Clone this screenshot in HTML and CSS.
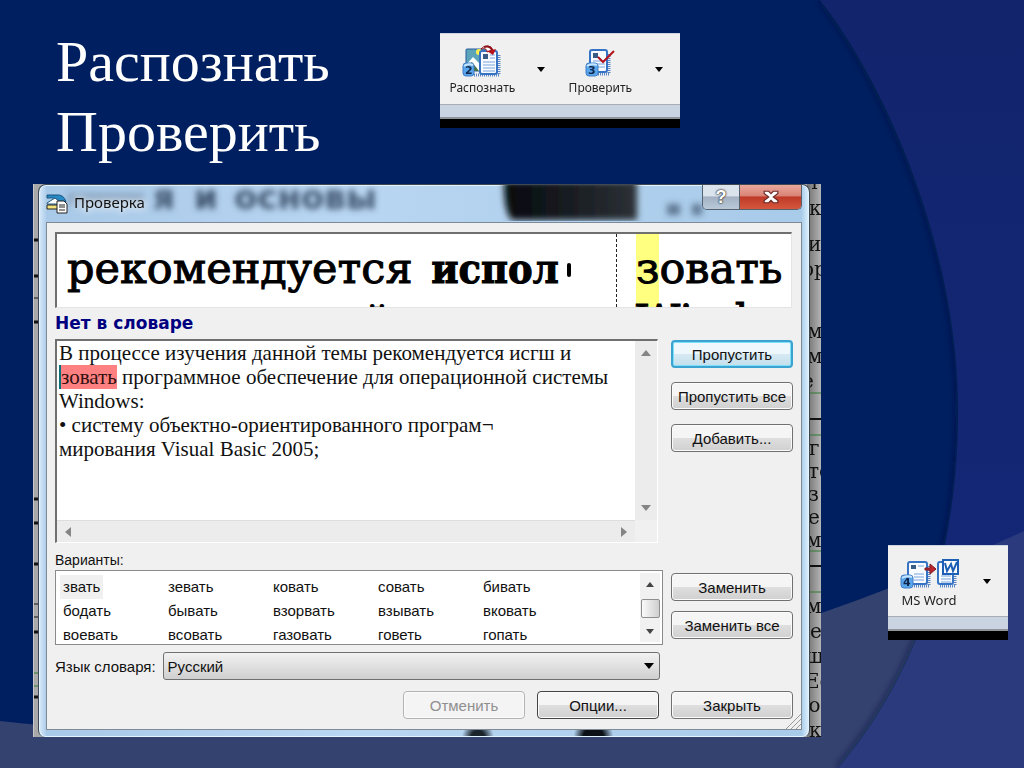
FILE: index.html
```html
<!DOCTYPE html>
<html lang="ru">
<head>
<meta charset="utf-8">
<meta name="viewport" content="width=device-width, initial-scale=1">
<title>Распознать Проверить</title>
<link rel="stylesheet" href="styles.css">
</head>
<body>
<svg class="backdrop" viewBox="0 0 1024 768" preserveAspectRatio="none" aria-hidden="true">
  <defs>
    <linearGradient id="side" x1="0" y1="0" x2="0" y2="1"><stop offset="0" stop-color="#12246c"/><stop offset="1" stop-color="#14287a"/></linearGradient>
    <filter id="soft" x="-10%" y="-10%" width="120%" height="120%"><feGaussianBlur stdDeviation="3"/></filter>
    <clipPath id="disc"><path d="M0 0H820C890 90 958 255 958 410C958 540 925 665 838 768H0Z"/></clipPath>
  </defs>
  <rect width="1024" height="768" fill="url(#side)"/>
  <path d="M0 721C330 760 700 680 1024 531V768H0Z" fill="#2b3a7c"/>
  <g clip-path="url(#disc)">
    <rect width="1024" height="768" fill="#001f60"/>
    <path d="M0 721C330 760 700 680 1024 531V768H0Z" fill="#344270"/>
    <path d="M820 0C890 90 958 255 958 410C958 540 925 665 838 768" fill="none" stroke="#001038" stroke-opacity=".5" stroke-width="6" filter="url(#soft)"/>
  </g>
</svg>

<main class="slide">
  <section class="content">
    <header class="heading">
      <h1>Распознать Проверить</h1>
      <div class="strip">
        <div class="tools">
          <button class="tool" type="button">
            <svg width="40" height="34" viewBox="0 0 40 34" aria-hidden="true">
              <path d="M12 31H37V10" stroke="#5a87c4" stroke-width="3" stroke-dasharray="1 1" fill="none"/>
              <rect x="4" y="5" width="20" height="22" rx="1" fill="#5ba4ba" stroke="#275b9c"/>
              <circle cx="17" cy="8" r="3" fill="#fff04a"/>
              <path d="M5 20L11 13L19 21V27H5Z" fill="#fff"/><path d="M5 22L10 18L17 27H5Z" fill="#43733f"/>
              <rect x="18" y="7" width="17" height="23" rx="2" fill="#f7fbff" stroke="#3673c4" stroke-width="2"/>
              <rect x="21" y="10" width="5" height="5" fill="#3a5d88"/><path d="M28 11H33M28 14H33M21 18H33M21 21H33M21 24H33M21 27H33" stroke="#78a2dd"/>
              <path d="M19 5C22 1 29 1 31 6L25 8C25 5 23 4 19 5Z" fill="#fff" stroke="#8e1117"/><path d="M22 3Q28 1 30 6" stroke="#8e1117" stroke-width="2" fill="none"/><path d="M25 7L34 5L31 11Z" fill="#b3121c"/>
              <rect x="1" y="19" width="11" height="13" rx="3" fill="#5aa6ed" stroke="#3f7cc6"/><path d="M2 22Q6 19 11 21" stroke="#c6e5ff" stroke-width="2" fill="none"/>
              <text x="3" y="30" class="badge">2</text>
            </svg>
            <span>Распознать</span>
          </button>
          <button class="drop" type="button" aria-label="Меню распознавания"><svg width="8" height="5" viewBox="0 0 8 5"><path d="M0 0H8L4 5Z"/></svg></button>
          <button class="tool" type="button">
            <svg width="40" height="34" viewBox="0 0 40 34" aria-hidden="true">
              <path d="M18 30H29V9" stroke="#5a87c4" stroke-width="3" stroke-dasharray="1 1" fill="none"/>
              <rect x="10" y="6" width="17" height="22" rx="2" fill="#f7fbff" stroke="#3673c4" stroke-width="2"/>
              <rect x="13" y="9" width="5" height="5" fill="#3a5d88"/><path d="M13 17H25M13 20H25M13 23H25" stroke="#78a2dd"/>
              <path d="M18 13L23 18L34 7" stroke="#b3121c" stroke-width="2" fill="none"/>
              <rect x="6" y="19" width="12" height="13" rx="3" fill="#5aa6ed" stroke="#3f7cc6"/><path d="M7 22Q11 19 17 21" stroke="#c6e5ff" stroke-width="2" fill="none"/>
              <text x="8" y="30" class="badge">3</text>
            </svg>
            <span>Проверить</span>
          </button>
          <button class="drop" type="button" aria-label="Меню проверки"><svg width="8" height="5" viewBox="0 0 8 5"><path d="M0 0H8L4 5Z"/></svg></button>
        </div>
      </div>
    </header>

    <div class="shot">
      <svg class="page-left" width="5" height="553" viewBox="0 0 5 553" aria-hidden="true">
        <path d="M0 56H5M0 92H5M0 138H5M0 315H5M0 339H5M0 380H5M0 448H5M0 513H5" stroke="#111" stroke-width="3"/>
        <path d="M0 489H5M0 502H5" stroke="#2f7d32"/><path d="M0 114H5M0 420H5M0 433H5" stroke="#111"/>
      </svg>
      <svg class="page-edge" width="14" height="553" viewBox="0 0 14 553" aria-hidden="true">
        <g class="edge-text">
          <text x="2" y="5">т</text><text x="2" y="31">к</text><text x="1" y="67">и</text><text x="-5" y="92">ор</text>
          <text x="0" y="154">м</text><text x="0" y="179">м</text><text x="-5" y="204">е</text>
          <text x="2" y="271">г</text><text x="1" y="294">то</text><text x="1" y="317">з</text><text x="1" y="340">е</text><text x="-1" y="363">м</text>
          <text x="-1" y="429">м</text><text x="3" y="454">е</text><text x="-2" y="479">ш</text><text x="-2" y="504">Ес</text><text x="-4" y="528">ю</text><text x="2" y="553">к</text>
        </g>
        <path d="M0 209H14M0 251H14M0 367H14M0 408H14" stroke="#2f7d32"/>
        <path d="M0 235H14M0 382H14" stroke="#111" stroke-width="2"/>
      </svg>
      <section class="window" aria-labelledby="wtitle">
        <div class="titlebar">
          <svg class="glass" width="680" height="36" viewBox="0 0 680 36" aria-hidden="true">
            <defs>
              <filter id="haze" x="-20%" y="-50%" width="140%" height="200%"><feGaussianBlur stdDeviation="3"/></filter>
              <linearGradient id="blob"><stop offset="0" stop-color="#05090e"/><stop offset="1" stop-color="#2c3136"/></linearGradient>
            </defs>
            <g filter="url(#haze)" class="haze-text">
              <path d="M22 8H98V20H22Z" opacity=".3"/><text x="107" y="24">я</text><text x="148" y="24">и</text><text x="188" y="24">основы</text>
              <path d="M621 19H634V30H621ZM646 19H656V30H646Z" opacity=".7"/>
            </g>
            <path d="M458 -4H591V35H466Q458 28 458 -4Z" fill="url(#blob)" filter="url(#haze)"/>
          </svg>
          <svg class="app-icon" width="22" height="20" viewBox="0 0 22 20" aria-hidden="true">
            <path d="M1 1H10Q18 0 20 8H14Q11 3 1 4Z" fill="#2789c5" stroke="#16547f"/>
            <path d="M1 9L9 4L14 8V10H1Z" fill="#fff" stroke="#225a83"/><path d="M1 11H12V15H1Z" fill="#f4e27f" stroke="#222"/>
            <path d="M11 7H18L21 10V19H11Z" fill="#fff" stroke="#222"/><path d="M13 11H19M13 13H19M13 16H19" stroke="#222"/>
          </svg>
          <h2 id="wtitle">Проверка</h2>
          <div class="caption">
            <button type="button" class="help" aria-label="Справка">?</button>
            <button type="button" class="close" aria-label="Закрыть окно"><svg width="16" height="14" viewBox="0 0 14 12"><path d="M1 1H5L7 3L9 1H13V3L9 6L13 9V11H9L7 9L5 11H1V9L5 6L1 3V1Z" fill="#fff" stroke="#6b2b28"/></svg></button>
          </div>
        </div>

        <div class="panel">
          <div class="scan">
            <div class="scan-left"><span>рекомендуется</span> <b>испол</b><i></i><div class="scan-next">й</div></div>
            <div class="scan-right"><mark>з</mark>овать<div>Wind</div></div>
          </div>
          <p class="notice">Нет в словаре</p>

          <div class="row">
            <div class="editor">
              <div class="text" role="textbox" aria-multiline="true" aria-label="Текст" contenteditable="true" spellcheck="false">В процессе изучения данной темы рекомендуется исгш и<br><mark>зовать</mark> программное обеспечение для операционной системы<br>Windows:<br>• систему объектно-ориентированного програм¬<br>мирования Visual Basic 2005;</div>
              <div class="vbar"><svg width="10" height="6" viewBox="0 0 10 6"><path d="M0 6H10L5 0Z"/></svg><svg width="10" height="6" viewBox="0 0 10 6"><path d="M0 0H10L5 6Z"/></svg></div>
              <div class="hbar"><svg width="6" height="10" viewBox="0 0 6 10"><path d="M6 0V10L0 5Z"/></svg><svg width="6" height="10" viewBox="0 0 6 10"><path d="M0 0V10L6 5Z"/></svg></div>
            </div>
            <div class="stack stack-wide">
              <button type="button" class="btn default">Пропустить</button>
              <button type="button" class="btn">Пропустить все</button>
              <button type="button" class="btn">Добавить...</button>
            </div>
          </div>

          <p class="variants" id="variants">Варианты:</p>
          <div class="row">
            <div class="listbox">
              <ul role="listbox" aria-labelledby="variants">
                <li role="option" aria-selected="true"><span>звать</span></li><li role="option">зевать</li><li role="option">ковать</li><li role="option">совать</li><li role="option">бивать</li>
                <li role="option">бодать</li><li role="option">бывать</li><li role="option">взорвать</li><li role="option">взывать</li><li role="option">вковать</li>
                <li role="option">воевать</li><li role="option">всовать</li><li role="option">газовать</li><li role="option">говеть</li><li role="option">гопать</li>
              </ul>
              <div class="listbar"><svg width="8" height="5" viewBox="0 0 8 5"><path d="M0 5H8L4 0Z"/></svg><div class="thumb"></div><svg width="8" height="5" viewBox="0 0 8 5"><path d="M0 0H8L4 5Z"/></svg></div>
            </div>
            <div class="stack">
              <button type="button" class="btn">Заменить</button>
              <button type="button" class="btn">Заменить все</button>
            </div>
          </div>

          <div class="language">
            <label for="lang">Язык словаря:</label>
            <div class="combo">
              <select id="lang"><option>Русский</option></select>
              <svg width="10" height="6" viewBox="0 0 10 6" aria-hidden="true"><path d="M0 0H10L5 6Z"/></svg>
            </div>
          </div>

          <div class="actions">
            <button type="button" class="btn" disabled>Отменить</button>
            <button type="button" class="btn strong">Опции...</button>
            <button type="button" class="btn">Закрыть</button>
          </div>
          <svg class="grip" width="15" height="15" viewBox="0 0 15 15" aria-hidden="true"><path d="M0 15L15 0M5 15L15 5M10 15L15 10" stroke="#999" stroke-width="1"/></svg>
        </div>
      </section>
    </div>
  </section>

  <aside class="export">
    <div class="strip">
      <div class="tools">
        <button class="tool" type="button">
          <svg width="62" height="34" viewBox="0 0 62 34" aria-hidden="true">
            <path d="M16 30H31V10M42 30H57V20" stroke="#5a87c4" stroke-width="3" stroke-dasharray="1 1" fill="none"/>
            <rect x="10" y="6" width="19" height="22" rx="2" fill="#f7fbff" stroke="#3673c4" stroke-width="2"/>
            <rect x="13" y="9" width="5" height="4" fill="#3a5d88"/><path d="M20 10H26M16 18H26M16 21H26M16 24H26" stroke="#78a2dd"/>
            <rect x="40" y="6" width="15" height="22" rx="2" fill="#f7fbff" stroke="#3673c4" stroke-width="2"/><path d="M43 20H53M43 23H53M43 26H53" stroke="#78a2dd"/>
            <path d="M27 12H32V8L38 13L32 18V14H27Z" fill="#bd2530" stroke="#7f1a20"/>
            <rect x="45" y="4" width="15" height="14" fill="#fff" stroke="#1c5fb5" stroke-width="2"/><path d="M47 7L49 15L53 8L55 15L59 6" stroke="#1c5fb5" stroke-width="2" fill="none"/>
            <rect x="3" y="19" width="12" height="13" rx="3" fill="#5aa6ed" stroke="#3f7cc6"/><path d="M4 22Q8 19 14 21" stroke="#c6e5ff" stroke-width="2" fill="none"/>
            <text x="5" y="30" class="badge">4</text>
          </svg>
          <span>MS Word</span>
        </button>
        <button class="drop" type="button" aria-label="Меню экспорта"><svg width="8" height="5" viewBox="0 0 8 5"><path d="M0 0H8L4 5Z"/></svg></button>
      </div>
    </div>
  </aside>
</main>
</body>
</html>
```
FILE: styles.css
```css
* { box-sizing: border-box; }
body { margin: 0; background: #001f60; color: #111; font-family: "Liberation Sans", Arial, sans-serif; }
button, select { font-family: inherit; color: inherit; }
h1, h2, p, ul { margin: 0; padding: 0; font-weight: 400; }
.backdrop { position: fixed; inset: 0; width: 100%; height: 100%; z-index: -1; }

.slide { display: flex; gap: 67px; min-height: 100vh; padding: 27px 16px 31px 33px; }
.content { flex: 1; min-width: 0; }
.heading { display: flex; justify-content: space-between; align-items: flex-start; padding: 0 141px 0 23px; height: 157px; }
.heading h1 { width: 300px; color: #fff; font-family: "Liberation Serif", "Times New Roman", serif; font-size: 58px; line-height: 70px; }
.heading .strip { width: 240px; margin-top: 6px; }
.export { width: 120px; margin-top: 518px; }

.strip { background: #f0f0f0; border-top: 1px solid #cdd5e2; border-bottom: 9px solid #000; }
.strip::after { content: ""; display: block; height: 12px; background: #c9d3e1; border-top: 1px solid #a8adb3; border-bottom: 2px solid #8f9499; }
.tools { display: flex; height: 70px; padding-left: 4px; }
.tool, .drop { border: 0; background: none; padding: 0; }
.tool { width: 78px; display: flex; flex-direction: column; align-items: center; padding-top: 10px; font: 12px/20px "Noto Sans", sans-serif; color: #222; white-space: nowrap; }
.export .tool { width: 74px; font-size: 13px; }
.tool svg { flex: none; }
.drop { width: 42px; display: flex; justify-content: center; align-items: center; }
.badge { font: bold 11px "DejaVu Sans", sans-serif; fill: #10264a; }

.shot { position: relative; overflow: hidden; background: #a9a9a9; padding: 0 11px 0 4px; border-left: 1px solid #c8c8c8; }
.page-left { position: absolute; top: 0; left: 0; }
.page-edge { position: absolute; top: 0; right: 0; background: linear-gradient(90deg, #707070, #b4b4b4); }
.edge-text { font: 20px "DejaVu Serif", serif; fill: #111; }

.window {
  position: relative; padding: 0 7px 7px 7px; border: 1px solid #3d4854; border-bottom: 0; border-radius: 8px 8px 7px 7px;
  background:
    radial-gradient(circle 16px at 57% 100%, #1b232b 40%, transparent) no-repeat,
    radial-gradient(circle 20px at 72% 100%, #0b1117 50%, transparent) no-repeat,
    linear-gradient(90deg, #d9ebfa 0, #a9c9e8 8px, #b9d6f2 40%, #a8cbe9 99%, #e0f2ff 100%);
  box-shadow: inset 0 0 0 1px #e4f4ff;
}
.titlebar { position: relative; display: flex; align-items: center; gap: 6px; height: 37px; }
.glass { position: absolute; left: 0; top: 0; overflow: hidden; }
.haze-text { font: bold 34px "DejaVu Sans", sans-serif; fill: #3f546e; }
.app-icon, .titlebar h2 { position: relative; }
.titlebar h2 { font: 15px/20px "Noto Sans", sans-serif; text-shadow: 0 0 6px #fff, 0 0 8px #fff; padding-bottom: 4px; }
.caption { position: relative; align-self: flex-start; margin-left: auto; display: flex; height: 25px; border: 1px solid #56616e; border-top: 0; border-radius: 0 0 5px 5px; overflow: hidden; }
.caption button { border: 0; padding: 0; display: flex; align-items: center; justify-content: center; }
.help { width: 36px; color: #fff; font-size: 18px; font-weight: 700; background: linear-gradient(#dbe3ec 45%, #a3b1c3 50%, #b9c9da); text-shadow: 0 0 2px #222, 0 0 2px #222; }
.caption .close { width: 62px; border-left: 1px solid #56616e; background: linear-gradient(#e9a79c 0, #d98476 45%, #bf3a28 50%, #d5573c); }

.panel { position: relative; padding: 9px 8px 10px; border: 1px solid #7e8a98; background: #f0f0f0; }
.scan { display: flex; height: 76px; overflow: hidden; margin-right: 1px; border: 1px solid #e4e4e4; border-top: 2px solid #6f6f6f; border-left: 2px solid #6f6f6f; background: #fff; color: #000; font: 43px/52px "DejaVu Serif", serif; -webkit-text-stroke: 1px #000; white-space: nowrap; }
.scan-left { flex: 1; min-width: 0; padding: 8px 0 0 10px; border-right: 1px dashed #222; }
.scan-left b { margin-left: 5px; font-family: "DejaVu Serif Condensed", "DejaVu Serif", serif; font-size: 41px; }
.scan-left i { display: inline-block; width: 4px; height: 14px; margin-left: 8px; background: #000; border-radius: 2px; vertical-align: 6px; }
.scan-next { padding-left: 296px; }
.scan-right { width: 174px; padding: 8px 0 0 19px; }
.scan-right mark { padding: 20px 0; background: #ffff80; }
.notice { color: #000080; font: bold 17px/31px "DejaVu Sans", sans-serif; }
.row { display: grid; grid-template-columns: minmax(0, 1fr) 122px; gap: 8px; }

.editor { display: grid; grid-template: 1fr 22px / minmax(0, 1fr) 22px; height: 204px; margin-right: 5px; border: 1px solid #fff; border-top: 2px solid #6f6f6f; border-left: 2px solid #6f6f6f; background: #f0f0f0; }
.text { padding: 0 0 0 2px; background: #fff; color: #111; font: 21px/24px "Liberation Serif", "Times New Roman", serif; white-space: nowrap; overflow: hidden; outline: 0; }
.text mark { background: #ff8080; color: #301010; border-left: 2px solid #087078; }
.vbar, .hbar { display: flex; justify-content: space-between; align-items: center; fill: #858585; background: #ececec; }
.vbar { flex-direction: column; padding: 9px 0; }
.hbar { padding: 0 8px; border-top: 1px solid #ddd; }

.stack { display: flex; flex-direction: column; gap: 10px; padding-top: 3px; }
.stack-wide { gap: 14px; padding-top: 1px; }
.btn { width: 122px; height: 28px; padding: 0; border: 1px solid #707070; border-radius: 4px; background: linear-gradient(#f5f5f5 48%, #dedede 52%, #d0d0d0); box-shadow: inset 0 0 0 1px #fbfbfb; font-size: 15px; white-space: nowrap; }
.default { border: 2px solid #3ba3cf; background: linear-gradient(#eef7fb 48%, #d5e9f2 52%, #c4dfeb); box-shadow: inset 0 0 0 1px #7fe0fa; }
.strong { border-color: #444; }
.btn:disabled { color: #8f8f8f; border-color: #b3b3b3; background: #f4f4f4; }

.variants { margin-top: 7px; font-size: 14px; line-height: 20px; }
.listbox { display: flex; height: 75px; padding: 2px; border: 1px solid #8a8a8a; background: #fff; }
.listbox ul { flex: 1; display: grid; grid-template-columns: repeat(5, 105px); grid-auto-rows: 24px; padding: 2px 0 0 2px; list-style: none; font-size: 15px; line-height: 24px; }
.listbox li { padding-left: 3px; }
.listbox li[aria-selected] { padding-left: 0; }
.listbox li span { display: inline-block; padding: 0 3px; background: #f0f0f0; }
.listbar { width: 20px; display: flex; flex-direction: column; justify-content: space-between; align-items: center; padding: 9px 0 8px; background: #f1f1f1; fill: #444; }
.thumb { width: 19px; height: 19px; border: 1px solid #8e8e8e; border-radius: 2px; background: linear-gradient(90deg, #fafafa, #cfcfcf); }

.language { display: flex; align-items: center; gap: 7px; margin: 7px 133px 0 0; font-size: 15px; }
.combo { position: relative; flex: 1; }
.combo select { width: 100%; height: 28px; padding: 0 4px; border: 1px solid #707070; border-radius: 3px; appearance: none; background: linear-gradient(#f2f2f2, #cfcfcf); font-size: 15px; }
.combo svg { position: absolute; right: 6px; top: 11px; pointer-events: none; }
.actions { display: flex; justify-content: flex-end; gap: 12px; margin-top: 11px; }
.grip { position: absolute; right: 0; bottom: 0; }
```
